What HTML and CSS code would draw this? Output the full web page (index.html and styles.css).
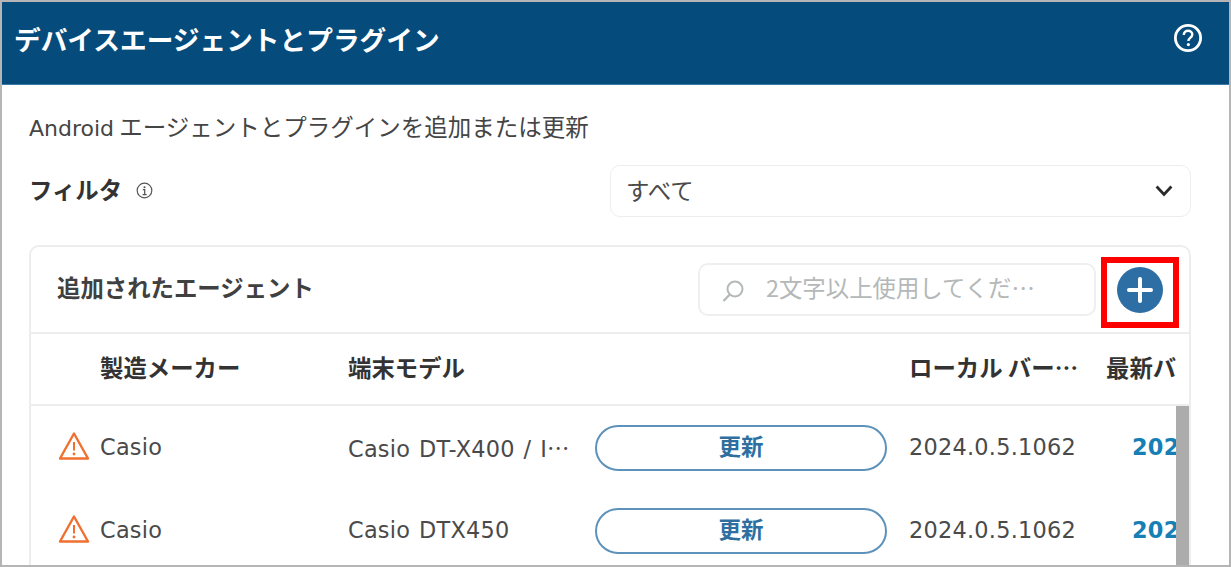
FILE: index.html
```html
<!DOCTYPE html>
<html lang="ja">
<head>
<meta charset="utf-8">
<title>デバイスエージェントとプラグイン</title>
<link rel="stylesheet" href="styles.css">
</head>
<body>
<div class="frame">
  <header class="topbar">
    <h1 class="title">デバイスエージェントとプラグイン</h1>
    <svg class="help" viewBox="0 0 30 30" width="30" height="30" aria-hidden="true">
      <circle cx="15" cy="15" r="12.600" fill="none" stroke="#fff" stroke-width="2.800"/>
      <path d="M10.800 12c0-2.600 1.900-4.200 4.300-4.200s4.200 1.600 4.200 3.800c0 3-3.900 3.200-3.900 6.400" fill="none" stroke="#fff" stroke-width="2.400"/>
      <circle cx="15.400" cy="21.600" r="1.600" fill="#fff"/>
    </svg>
  </header>
  <main class="content">
    <p class="desc"><span class="latin">Android</span> エージェントとプラグインを追加または更新</p>
    <div class="filter-row">
      <div class="filter-label">
        <span class="filter-text">フィルタ</span>
        <svg class="info" viewBox="0 0 16 16" width="17" height="17" aria-hidden="true">
          <circle cx="8" cy="8" r="6.900" fill="none" stroke="#555" stroke-width="1.100"/>
          <path d="M6.400 7.200H8.200V11.600M6.200 11.800H10" fill="none" stroke="#555" stroke-width="1.200"/>
          <circle cx="8" cy="4.900" r="1" fill="#555"/>
        </svg>
      </div>
      <div class="select">
        <span>すべて</span>
        <svg viewBox="0 0 18 12" width="18" height="12" aria-hidden="true">
          <path d="M1.600 1.500 9 9.500 16.400 1.500" fill="none" stroke="#2b2b2b" stroke-width="2.800"/>
        </svg>
      </div>
    </div>
    <section class="card">
      <div class="card-head">
        <h2 class="card-title">追加されたエージェント</h2>
        <div class="search">
          <svg class="search-icon" viewBox="0 0 26 24" width="26" height="24" aria-hidden="true">
            <circle cx="15" cy="10" r="7.500" fill="none" stroke="#b4b8b8" stroke-width="2"/>
            <path d="M9.800 15.500 3.500 22" fill="none" stroke="#b4b8b8" stroke-width="2.400"/>
          </svg>
          <span class="placeholder">2文字以上使用してくだ…</span>
        </div>
        <div class="add-box">
          <svg viewBox="0 0 46 46" width="46" height="46" aria-hidden="true">
            <circle cx="23" cy="23" r="23" fill="#2d6fa5"/>
            <path d="M23 12V34M12 23H34" stroke="#fff" stroke-width="4" stroke-linecap="round"/>
          </svg>
        </div>
      </div>
      <div class="row head-row">
        <span class="c-maker">製造メーカー</span>
        <span class="c-model">端末モデル</span>
        <span class="c-local">ローカル バー…</span>
        <span class="c-latest">最新バ</span>
      </div>
      <div class="rows">
        <div class="row data-row">
          <span class="c-warn"><svg viewBox="0 0 32 30" width="32" height="30" aria-hidden="true"><use href="#warn"/></svg></span>
          <span class="c-maker-d">Casio</span>
          <span class="c-model-d">Casio DT-X400 / I<span class="cjk">…</span></span>
          <span class="c-btn"><span class="update">更新</span></span>
          <span class="c-local-d">2024.0.5.1062</span>
          <span class="c-latest-d">202</span>
        </div>
        <div class="row data-row">
          <span class="c-warn"><svg viewBox="0 0 32 30" width="32" height="30" aria-hidden="true"><use href="#warn"/></svg></span>
          <span class="c-maker-d">Casio</span>
          <span class="c-model-d">Casio DTX450</span>
          <span class="c-btn"><span class="update">更新</span></span>
          <span class="c-local-d">2024.0.5.1062</span>
          <span class="c-latest-d">202</span>
        </div>
        <div class="scrollbar"></div>
      </div>
    </section>
  </main>
</div>
<svg class="defs" width="0" height="0" aria-hidden="true">
  <symbol id="warn" viewBox="0 0 32 30">
    <path d="M16 2.500 30 27.500H2Z" fill="none" stroke="#f07030" stroke-width="2.400" stroke-linejoin="round"/>
    <path d="M16 11V19.500" stroke="#f07030" stroke-width="2"/>
    <circle cx="16" cy="23" r="1.400" fill="#f07030"/>
  </symbol>
</svg>
</body>
</html>
```
FILE: styles.css
```css
* { box-sizing: border-box; }
html, body { margin: 0; padding: 0; height: 100%; overflow: hidden; background: #fff; }
body { font-family: "Noto Sans CJK JP", "Noto Sans", sans-serif; color: #444; }
.defs { position: absolute; }
.frame {
  width: 1231px; height: 567px; border: 2px solid #b5b5b5;
  overflow: hidden; background: #fff;
}
.topbar {
  height: 83px; background: #054c7c; border-bottom: 1px solid #3d7aa5;
  display: flex; justify-content: space-between; align-items: flex-start;
  padding: 0 26px 0 12px;
}
.title {
  margin: 18px 0 0; font-size: 26.700px; line-height: 38px; font-weight: 700; color: #fff;
}
.help { margin-top: 21px; }
.content { padding: 0 38px 0 27px; }
.desc { margin: 24px 0 0; height: 34px; font-size: 23.500px; line-height: 34px; color: #454545; white-space: nowrap; }
.latin { font-family: "DejaVu Sans", sans-serif; font-size: 22px; line-height: 1; }
.filter-row { display: flex; justify-content: space-between; align-items: center; margin-top: 22px; height: 52px; }
.filter-label { display: flex; align-items: center; gap: 14px; margin-top: -4px; }
.filter-text { font-size: 23.400px; font-weight: 700; color: #333; line-height: 34px; }
.info { margin-top: 2px; }
.select {
  width: 581px; height: 52px; border: 1px solid #eceeee; border-radius: 10px;
  display: flex; justify-content: space-between; align-items: center; padding: 0 17px 0 15px;
  font-size: 23.400px; color: #4a4a4a;
}
.select span { position: relative; top: -1px; }
.card { margin-top: 28px; height: 330px; border: 2px solid #eceeee; border-bottom: 0; border-radius: 10px 10px 0 0; overflow: hidden; }
.card-head { height: 87px; display: flex; align-items: center; border-bottom: 2px solid #eceeee; padding-left: 26px; }
.card-title { margin: 0; font-size: 23.400px; font-weight: 700; color: #404040; flex: 1; position: relative; top: -3px; }
.search {
  width: 398px; height: 53px; border: 2px solid #eef0f0; border-radius: 10px;
  display: flex; align-items: center; gap: 20px; padding-left: 20px; margin-right: 5px;
}
.search-icon { margin-top: 2px; }
.placeholder { font-size: 23.400px; color: #b4b8b8; white-space: nowrap; position: relative; top: -3px; }
.add-box {
  width: 78px; height: 71px; border: 6px solid #f00; margin-top: 5px; padding-bottom: 4px;
  display: flex; align-items: center; justify-content: center; margin-right: 10px;
}
.row { display: flex; align-items: center; white-space: nowrap; }
.head-row { height: 72px; padding-bottom: 4px; border-bottom: 2px solid #eceeee; font-size: 23.400px; font-weight: 700; color: #333; }
.c-maker { width: 317px; padding-left: 69px; }
.c-model { width: 561px; }
.c-local { width: 197px; }
.c-latest { width: 70px; overflow: hidden; }
.rows { position: relative; height: 170px; overflow: hidden; }
.data-row { height: 83px; font-family: "DejaVu Sans", sans-serif; font-size: 22.400px; letter-spacing: 0.250px; color: #4a4a4a; }
.c-warn { width: 69px; padding-left: 27px; display: flex; margin-top: -4px; }
.c-maker-d { width: 248px; padding-bottom: 2px; }
.c-model-d { width: 247px; word-spacing: 1.500px; padding-bottom: 2px; }
.cjk { font-family: "Noto Sans CJK JP", sans-serif; }
.c-btn { width: 314px; display: flex; }
.update {
  width: 292px; height: 46px; border: 2px solid #5d92bb; border-radius: 23px; padding-bottom: 6px;
  display: flex; align-items: center; justify-content: center; letter-spacing: 0;
  font-family: "Noto Sans CJK JP", sans-serif; font-weight: 700; font-size: 22.500px; color: #2f6f9f;
}
.c-local-d { width: 223px; padding-bottom: 2px; }
.c-latest-d { width: 44px; overflow: hidden; font-weight: 700; color: #167fb5; padding-bottom: 2px; }
.scrollbar { position: absolute; top: 0; right: 0; width: 13px; height: 170px; background: #acacac; }
```
